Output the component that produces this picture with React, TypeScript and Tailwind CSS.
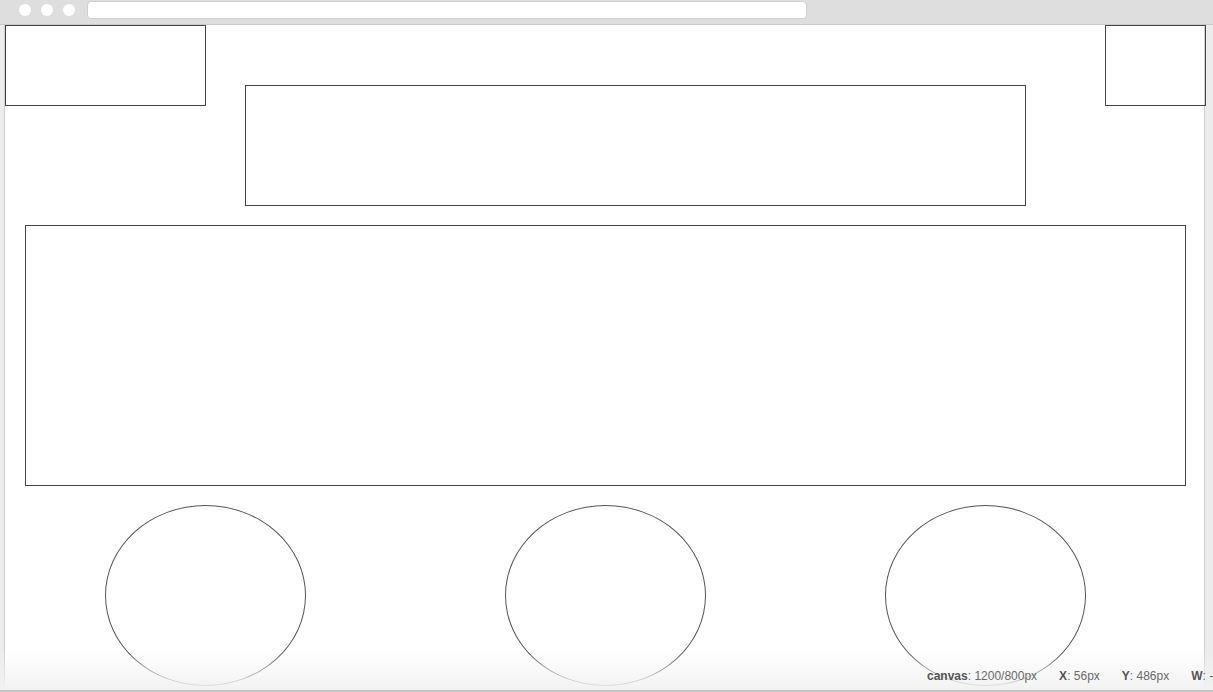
const boxes = [
  { key: "logo", cls: "left-0 top-0 w-[201px] h-[81px]" },
  { key: "nav", cls: "left-[1100px] top-0 w-[101px] h-[81px]" },
  { key: "header", cls: "left-[240px] top-[60px] w-[781px] h-[121px]" },
  { key: "hero", cls: "left-[20px] top-[200px] w-[1161px] h-[261px]" },
]

const circles = [
  { key: "c1", cls: "left-[100px]" },
  { key: "c2", cls: "left-[500px]" },
  { key: "c3", cls: "left-[880px]" },
]

const Stat = ({ label, value }: { label: string; value: string }) => (
  <span className="text-[#6a6a6a]">
    <span className="font-bold text-[#555]">{label}</span>: {value}
  </span>
)

const App = () => {
  return (
    <div className="w-[1213px] h-[692px] overflow-hidden bg-[#ececec] flex flex-col font-['Liberation_Sans',Arial,sans-serif]">
      {/* browser top bar */}
      <div className="h-[25px] shrink-0 bg-[#dedede] border-b border-[#cacaca] flex items-start">
        <div className="flex gap-[10px] pl-[19px] pt-[4px]">
          <span className="w-3 h-3 rounded-full bg-white" />
          <span className="w-3 h-3 rounded-full bg-white" />
          <span className="w-3 h-3 rounded-full bg-white" />
        </div>
        <div className="ml-[12px] mt-[1px] w-[720px] h-[18px] bg-white rounded-[4px] border border-[#cfcfcf]" />
      </div>

      <div className="relative flex flex-1 border-b-2 border-[#c6c6c6]">
        <div className="w-[5px] shrink-0 bg-[#ececec] border-r border-[#cfcfcf]" />

        {/* design canvas */}
        <div className="relative w-[1199px] bg-white">
          {boxes.map((b) => (
            <div key={b.key} className={`absolute border border-[#444] ${b.cls}`} />
          ))}
          {circles.map((c) => (
            <div
              key={c.key}
              className={`absolute top-[480px] w-[201px] h-[181px] rounded-[50%] border border-[#555] ${c.cls}`}
            />
          ))}
        </div>

        <div className="flex-1 bg-[#ececec] border-l border-[#cfcfcf]" />

        {/* status bar */}
        <div className="absolute left-0 right-0 bottom-0 h-[40px] bg-gradient-to-b from-white/0 to-[#f2f2f2] flex items-end pb-[8px] overflow-hidden">
          <div className="ml-[927px] flex gap-[22px] whitespace-nowrap text-[12px] leading-none">
            <Stat label="canvas" value="1200/800px" />
            <Stat label="X" value="56px" />
            <Stat label="Y" value="486px" />
            <Stat label="W" value="-" />
          </div>
        </div>
      </div>
    </div>
  )
}

export default App
